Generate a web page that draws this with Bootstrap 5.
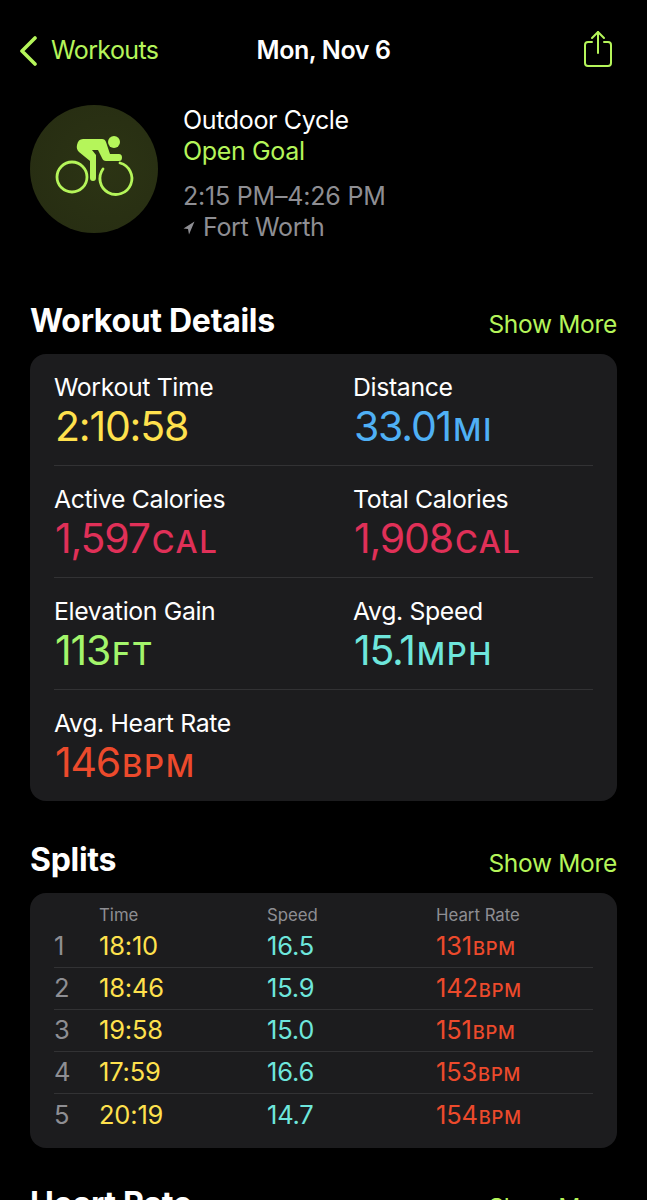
<!DOCTYPE html>
<html lang="en">
<head>
    <meta charset="UTF-8">
    <meta name="viewport" content="width=device-width, initial-scale=1.0">
    <title>Workout</title>
    <link href="https://cdn.jsdelivr.net/npm/bootstrap@5.3.3/dist/css/bootstrap.min.css" rel="stylesheet">
    <script src="https://cdn.jsdelivr.net/npm/bootstrap@5.3.3/dist/js/bootstrap.bundle.min.js"></script>
    <style>
        html, body { height: 1200px; overflow: hidden; }
        body { background: #000; color: #fff; font-family: Inter, "Liberation Sans", sans-serif; }
        .screen { padding: 29px 30px 0 30px; }
        .lime { color: #b5f55a; }
        .top-bar { height: 44px; font-size: 25px; letter-spacing: -0.4px; margin-left: -13px; }
        .top-left { width: 150px; }
        .top-right { width: 137px; }
        .top-right svg { margin-right: 3px; margin-bottom: 4px; }
        .top-title { font-weight: 600; font-size: 25px; }
        .back-text { margin-left: 14px; letter-spacing: -0.6px; }
        .summary { margin-top: 31px; height: 130px; }
        .ring { width: 128px; height: 128px; border-radius: 50%; background: radial-gradient(circle at 60% 50%, #2c3414, #262c12); flex: none; margin-top: 1px; }
        .summary-text { margin-left: 25px; padding-top: 1px; font-size: 25px; line-height: 31px; letter-spacing: -0.35px; }
        .summary-gap { margin-top: 14px; letter-spacing: -0.2px; }
        .gray-text { color: #8e8e93; }
        .sec-head { margin-top: 64px; height: 46px; }
        .sec-title { font-size: 32px; font-weight: 700; letter-spacing: -0.3px; margin: 0; line-height: 46px; }
        .sec-link { font-size: 24.5px; letter-spacing: -0.3px; margin-top: 8px; }
        .panel { background: #1c1c1e; border-radius: 16px; margin-top: 10px; padding: 0 24px; }
        .detail-row { height: 112px; border-bottom: 1px solid #323234; padding-top: 17px; }
        .detail-row:last-child { border-bottom: 0; height: 111px; }
        .detail-cell { width: 299px; flex: none; padding-left: 1px; }
        .detail-label { font-size: 24.8px; line-height: 32px; letter-spacing: -0.35px; margin-left: -1px; }
        .detail-value { font-size: 41px; line-height: 46px; letter-spacing: -1.2px; }
        .unit { font-size: 0.76em; letter-spacing: 1.6px; font-weight: 500; margin-left: 2px; }
        .c-yellow { color: #ffe14d; }
        .c-blue { color: #4fb0f5; }
        .c-pink { color: #e03058; }
        .c-green { color: #a3f56b; }
        .c-cyan { color: #6ee6dc; }
        .c-red { color: #ec4a2c; }
        .splits-title { margin-top: 36px; }
        .split-panel { height: 255px; margin-top: 10px; }
        .split-row { height: 42px; border-bottom: 1px solid #323234; font-size: 25.5px; letter-spacing: -0.2px; }
        .split-row:last-child { border-bottom: 0; }
        .split-head { height: 33px; font-size: 16.8px; color: #8e8e93; letter-spacing: 0; border-bottom: 0; padding-top: 10px; }
        .s-num { width: 45px; color: #8e8e93; }
        .s-col { width: 168px; flex: none; }
        .s-rate { padding-left: 1px; }
        .split-row .unit { font-size: 0.72em; letter-spacing: 0.8px; margin-left: 1px; }
        .next-title { margin-top: 33px; }
    </style>
</head>
<body>
    <div class="screen">
        <!-- top bar -->
        <div class="top-bar d-flex align-items-center justify-content-between">
            <div class="top-left d-flex align-items-center lime">
                <svg width="20" height="30" viewBox="0 0 20 30" fill="none" stroke="#b5f55a" stroke-width="3.6" stroke-linecap="round" stroke-linejoin="round"><path d="M18 2 L5 15 L18 28"/></svg>
                <span class="back-text">Workouts</span>
            </div>
            <div class="top-title">Mon, Nov 6</div>
            <div class="top-right d-flex justify-content-end">
                <svg width="32" height="40" viewBox="0 0 32 40" fill="none" stroke="#b5f55a" stroke-width="2" stroke-linecap="round" stroke-linejoin="round"><path d="M10 13 H6 Q3 13 3 16 V34 Q3 37 6 37 H26 Q29 37 29 34 V16 Q29 13 26 13 H22"/><path d="M16 24 V3"/><path d="M10 9 L16 3 L22 9"/></svg>
            </div>
        </div>

        <!-- summary -->
        <div class="summary d-flex">
            <div class="ring">
                <svg width="128" height="128" viewBox="0 0 128 128" fill="none">
                    <circle cx="42" cy="72" r="15" stroke="#b5f55a" stroke-width="2.8"/>
                    <path d="M90 58 A16 16 0 1 1 73 64" stroke="#b5f55a" stroke-width="2.8" stroke-linecap="round"/>
                    <circle cx="84" cy="37" r="6" fill="#b5f55a"/>
                    <path d="M53 34 H72 Q75 34 76 37 L80 49 H89 Q92 49 92 52.5 Q92 56 89 56 H76 Q73 56 72 53 L68 45 H62 L66 50 V73 Q66 76 63 76 Q60 76 60 73 V56 L49 47 Q46 44 47 40 Q48 34 53 34 Z" fill="#b5f55a"/>
                </svg>
            </div>
            <div class="summary-text">
                <div>Outdoor Cycle</div>
                <div class="lime">Open Goal</div>
                <div class="gray-text summary-gap">2:15 PM–4:26 PM</div>
                <div class="gray-text d-flex align-items-center">
                    <svg class="me-2" width="12" height="14" viewBox="0 0 12 14"><path d="M11.5 .5 L.5 7.5 L5 8 L6 13.5 Z" fill="#8e8e93"/></svg>
                    <span>Fort Worth</span>
                </div>
            </div>
        </div>

        <!-- workout details -->
        <div class="sec-head d-flex justify-content-between">
            <h2 class="sec-title">Workout Details</h2>
            <div class="sec-link lime">Show More</div>
        </div>
        <div class="panel">
            <div class="detail-row d-flex">
                <div class="detail-cell">
                    <div class="detail-label">Workout Time</div>
                    <div class="detail-value c-yellow">2:10:58</div>
                </div>
                <div class="detail-cell">
                    <div class="detail-label">Distance</div>
                    <div class="detail-value c-blue">33.01<span class="unit">MI</span></div>
                </div>
            </div>
            <div class="detail-row d-flex">
                <div class="detail-cell">
                    <div class="detail-label">Active Calories</div>
                    <div class="detail-value c-pink">1,597<span class="unit">CAL</span></div>
                </div>
                <div class="detail-cell">
                    <div class="detail-label">Total Calories</div>
                    <div class="detail-value c-pink">1,908<span class="unit">CAL</span></div>
                </div>
            </div>
            <div class="detail-row d-flex">
                <div class="detail-cell">
                    <div class="detail-label">Elevation Gain</div>
                    <div class="detail-value c-green">113<span class="unit">FT</span></div>
                </div>
                <div class="detail-cell">
                    <div class="detail-label">Avg. Speed</div>
                    <div class="detail-value c-cyan">15.1<span class="unit">MPH</span></div>
                </div>
            </div>
            <div class="detail-row d-flex">
                <div class="detail-cell">
                    <div class="detail-label">Avg. Heart Rate</div>
                    <div class="detail-value c-red">146<span class="unit">BPM</span></div>
                </div>
            </div>
        </div>

        <!-- splits -->
        <div class="sec-head splits-title d-flex justify-content-between">
            <h2 class="sec-title">Splits</h2>
            <div class="sec-link lime">Show More</div>
        </div>
        <div class="panel split-panel">
            <div class="split-row split-head d-flex">
                <div class="s-num"></div>
                <div class="s-col">Time</div>
                <div class="s-col">Speed</div>
                <div class="s-rate">Heart Rate</div>
            </div>
            <div class="split-row d-flex align-items-center">
                <div class="s-num">1</div><div class="s-col c-yellow">18:10</div><div class="s-col c-cyan">16.5</div><div class="s-rate c-red">131<span class="unit">BPM</span></div>
            </div>
            <div class="split-row d-flex align-items-center">
                <div class="s-num">2</div><div class="s-col c-yellow">18:46</div><div class="s-col c-cyan">15.9</div><div class="s-rate c-red">142<span class="unit">BPM</span></div>
            </div>
            <div class="split-row d-flex align-items-center">
                <div class="s-num">3</div><div class="s-col c-yellow">19:58</div><div class="s-col c-cyan">15.0</div><div class="s-rate c-red">151<span class="unit">BPM</span></div>
            </div>
            <div class="split-row d-flex align-items-center">
                <div class="s-num">4</div><div class="s-col c-yellow">17:59</div><div class="s-col c-cyan">16.6</div><div class="s-rate c-red">153<span class="unit">BPM</span></div>
            </div>
            <div class="split-row d-flex align-items-center">
                <div class="s-num">5</div><div class="s-col c-yellow">20:19</div><div class="s-col c-cyan">14.7</div><div class="s-rate c-red">154<span class="unit">BPM</span></div>
            </div>
        </div>

        <!-- heart rate, cut off by the bottom of the screen -->
        <div class="sec-head next-title d-flex justify-content-between">
            <h2 class="sec-title">Heart Rate</h2>
            <div class="sec-link lime">Show More</div>
        </div>
    </div>
</body>
</html>
